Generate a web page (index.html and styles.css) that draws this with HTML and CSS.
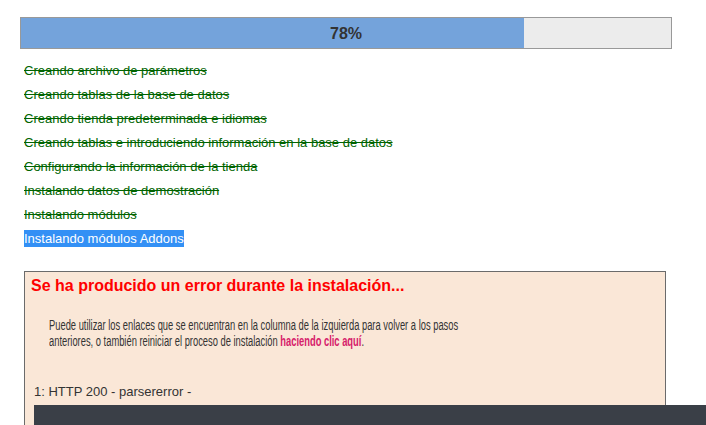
FILE: index.html
```html
<!DOCTYPE html>
<html lang="es">
<head>
    <meta charset="UTF-8">
    <title>Instalación</title>
    <link rel="stylesheet" href="styles.css">
</head>
<body>
    <div class="progress">
        <div class="progress-fill" style="width: 77.4%"></div>
        <span class="progress-label">78%</span>
    </div>

    <ul class="steps">
        <li class="done">Creando archivo de parámetros</li>
        <li class="done">Creando tablas de la base de datos</li>
        <li class="done">Creando tienda predeterminada e idiomas</li>
        <li class="done">Creando tablas e introduciendo información en la base de datos</li>
        <li class="done">Configurando la información de la tienda</li>
        <li class="done">Instalando datos de demostración</li>
        <li class="done">Instalando módulos</li>
        <li><span class="current">Instalando módulos Addons</span></li>
    </ul>

    <div class="error-box">
        <h3 class="error-title">Se ha producido un error durante la instalación...</h3>
        <p class="error-text">
            Puede utilizar los enlaces que se encuentran en la columna de la izquierda para volver a los pasos
            anteriores, o también reiniciar el proceso de instalación <a href="#" class="restart">haciendo clic aquí</a>.
        </p>
        <div class="error-log">1: HTTP 200 - parsererror -</div>
        <pre class="error-dump"></pre>
    </div>
</body>
</html>
```

FILE: styles.css
```css
* {
    margin: 0;
    padding: 0;
    box-sizing: border-box;
}

body {
    font-family: "Liberation Sans", Arial, sans-serif;
    font-size: 13px;
    color: #333;
    background: #fff;
    overflow: hidden;
}

/* Progress bar */
.progress {
    position: relative;
    width: 652px;
    height: 32px;
    margin: 17px 0 0 20px;
    border: 1px solid #999;
    background: #ececec;
}

.progress-fill {
    height: 100%;
    background: #74a3db;
}

.progress-label {
    position: absolute;
    top: 1px;
    left: 0;
    right: 0;
    line-height: 30px;
    text-align: center;
    font-weight: bold;
    font-size: 16px;
    color: #333;
}

/* Step list */
.steps {
    list-style: none;
    margin: 10px 0 0 24px;
}

.steps li {
    line-height: 24px;
}

.steps .done {
    color: #006400;
    text-decoration: line-through;
}

.current {
    background: #3390f5;
    color: #fff;
    padding: 1px 0;
}

/* Error box */
.error-box {
    width: 642px;
    height: 160px;
    margin: 20px 0 0 24px;
    padding: 4px 0 0 9px;
    border: 1px solid #6b6b6b;
    border-bottom: none;
    background: #fae7d7;
}

.error-title {
    color: #f00;
    font-size: 16px;
    line-height: 20px;
    margin-left: -3px;
}

/* the installer shows this paragraph in a narrow face */
.error-text {
    width: 630px;
    margin: 21px 0 0 15px;
    font-size: 14px;
    line-height: 16px;
    color: #333;
    transform: scaleX(0.668);
    transform-origin: left top;
}

.restart {
    color: #d6206a;
    font-weight: bold;
    text-decoration: none;
}

.error-log {
    margin-top: 34px;
    font-size: 13px;
    line-height: 18px;
}

.error-dump {
    width: 700px;
    height: 40px;
    margin-top: 4px;
    background: #3a3f47;
}
```
